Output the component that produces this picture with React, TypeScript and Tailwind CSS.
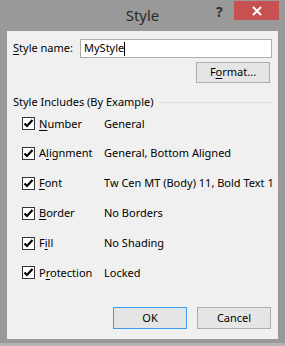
import React from "react";

const font = { fontFamily: '"Noto Sans", "Segoe UI", sans-serif' };

function Check() {
  return (
    <div className="w-[13px] h-[13px] border border-[#333333] bg-white flex items-center justify-center shrink-0">
      <svg width="11" height="11" viewBox="0 0 11 11">
        <path d="M1.5 5.5 L4 8 L9.5 2" fill="none" stroke="#000" strokeWidth="2.2" />
      </svg>
    </div>
  );
}

function Row({ pre, u, post, value }: { pre: string; u: string; post: string; value: string }) {
  return (
    <div className="h-[29.8px] flex items-center pl-[15px]">
      <Check />
      <div className="ml-[4px] w-[65px] text-[11px] text-black whitespace-nowrap">
        {pre}
        <span className="underline underline-offset-2">{u}</span>
        {post}
      </div>
      <div className="text-[11px] text-black whitespace-nowrap">{value}</div>
    </div>
  );
}

export default function App() {
  return (
    <div className="w-[285px] h-[346px] bg-[#999999] flex flex-col overflow-hidden" style={font}>
      <div className="h-[31px] relative flex items-start">
        <div className="absolute left-0 right-0 top-[4px] text-center text-[15px] text-[#2b2b2b]">Style</div>
        <div className="absolute left-[216px] top-[1px] text-[14px] font-bold text-[#333333]">?</div>
        <div className="absolute left-[234px] top-[1px] w-[45px] h-[19px] bg-[#c75050] flex items-center justify-center">
          <svg width="10" height="10" viewBox="0 0 10 10">
            <path d="M1 1 L9 9 M9 1 L1 9" stroke="#fff" strokeWidth="2" />
          </svg>
        </div>
      </div>
      <div className="mx-[7px] h-[308px] bg-[#f0f0f0] flex flex-col">
        <div className="mt-[8px] flex items-center pl-[6px] pr-[6px]">
          <div className="w-[67px] text-[11px] text-black">
            <span className="underline underline-offset-2">S</span>tyle name:
          </div>
          <div className="flex-1 h-[19px] bg-white border border-[#adadad] flex items-center pl-[3px] text-[11px] text-black">
            MyStyle<span className="inline-block w-px h-[14px] bg-black" />
          </div>
        </div>
        <div className="mt-[4px] flex justify-end pr-[8px]">
          <div className="w-[74px] h-[21px] border border-[#adadad] bg-[#e5e5e5] flex items-center justify-center text-[11px] text-black">
            F<span className="underline underline-offset-2">o</span>rmat...
          </div>
        </div>
        <div className="mt-[11px] h-[16px] flex items-center pl-[6px] pr-[6px]">
          <div className="text-[11px] text-black whitespace-nowrap">Style Includes (By Example)</div>
          <div className="flex-1 ml-[6px] h-px bg-[#dcdcdc]" />
        </div>
        <div className="-mt-px flex flex-col">
          <Row pre="" u="N" post="umber" value="General" />
          <Row pre="A" u="l" post="ignment" value="General, Bottom Aligned" />
          <Row pre="" u="F" post="ont" value="Tw Cen MT (Body) 11, Bold Text 1" />
          <Row pre="" u="B" post="order" value="No Borders" />
          <Row pre="F" u="i" post="ll" value="No Shading" />
          <Row pre="P" u="r" post="otection" value="Locked" />
        </div>
        <div className="mt-[19px] flex justify-end gap-[10px] pr-[7px]">
          <div className="w-[74px] h-[22px] border border-[#3c9cf0] bg-[#e5e5e5] flex items-center justify-center text-[11px] text-black">
            OK
          </div>
          <div className="w-[74px] h-[22px] border border-[#adadad] bg-[#e5e5e5] flex items-center justify-center text-[11px] text-black">
            Cancel
          </div>
        </div>
      </div>
      <div className="h-[4px]" />
      <div className="flex-1 bg-[#b4b4b4]" />
    </div>
  );
}
